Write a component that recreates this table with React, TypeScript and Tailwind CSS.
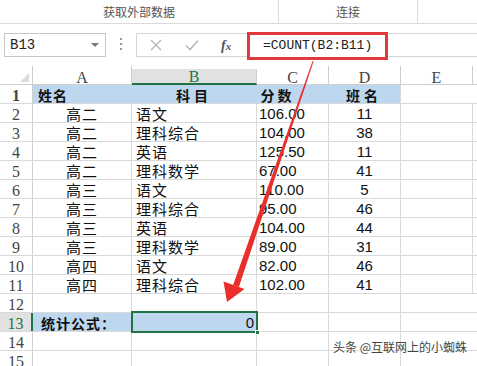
import React from "react";

// ---------------------------------------------------------------------------
// Data
// ---------------------------------------------------------------------------

const CJK = { fontFamily: '"Noto Sans CJK SC", "Noto Sans", sans-serif' };
const MONO = { fontFamily: '"Liberation Mono", "DejaVu Sans Mono", monospace' };
const SERIF = { fontFamily: '"Liberation Serif", "DejaVu Serif", serif' };
const NUM = { fontFamily: '"Liberation Sans", Arial, sans-serif' };

type Row = [string, string, string, string];

const ROWS: Row[] = [
  ["高二", "语文", "106.00", "11"],
  ["高二", "理科综合", "104.00", "38"],
  ["高二", "英语", "125.50", "11"],
  ["高二", "理科数学", "67.00", "41"],
  ["高三", "语文", "110.00", "5"],
  ["高三", "理科综合", "95.00", "46"],
  ["高三", "英语", "104.00", "44"],
  ["高三", "理科数学", "89.00", "31"],
  ["高四", "语文", "82.00", "46"],
  ["高四", "理科综合", "102.00", "41"],
];

const GRID = "border-r border-[#d9d9d9]";

// ---------------------------------------------------------------------------
// Pieces
// ---------------------------------------------------------------------------

function RowHead({ n, active }: { n: number; active?: boolean }) {
  return (
    <div
      style={SERIF}
      className={`flex w-[33px] shrink-0 items-center justify-center pt-[3px] text-[16px] leading-none ${
        active
          ? "border-r-2 border-[#217346] bg-[#e1e1e1] text-[#217346]"
          : "border-r border-[#cfcfcf] text-[#444]"
      }`}
    >
      {n}
    </div>
  );
}

function Rest() {
  return (
    <>
      <div className={`w-[72px] shrink-0 ${GRID}`} />
      <div className="flex-1" />
    </>
  );
}

function EmptyRow({ n }: { n: number }) {
  return (
    <div className="flex h-[19px] border-b border-[#d9d9d9]">
      <RowHead n={n} />
      <div className={`w-[99px] shrink-0 ${GRID}`} />
      <div className={`w-[125px] shrink-0 ${GRID}`} />
      <div className={`w-[72px] shrink-0 ${GRID}`} />
      <Rest />
    </div>
  );
}

export default function App() {
  return (
    <div className="relative h-[366px] w-[477px] overflow-hidden bg-white">
      {/* Ribbon group labels */}
      <div
        style={CJK}
        className="flex h-[24px] border-b border-[#dadada] text-[12px] text-[#555]"
      >
        <div className="flex w-[279px] items-center justify-center border-r border-[#dadada]">
          获取外部数据
        </div>
        <div className="flex w-[139px] items-center justify-center border-r border-[#dadada]">
          连接
        </div>
        <div className="flex-1" />
      </div>

      {/* Formula bar */}
      <div className="flex h-[42px] items-start pl-[4px] pt-[8px]">
        <div className="mt-[1px] flex h-[24px] w-[102px] items-center justify-between border border-[#c6c6c6] pl-[5px] pr-[6px]">
          <span style={MONO} className="text-[14px] text-[#222]">
            B13
          </span>
          <span className="h-0 w-0 border-x-[4px] border-t-[4px] border-x-transparent border-t-[#777]" />
        </div>
        <div className="flex w-[30px] flex-col items-center gap-[3px] pt-[6px]">
          <span className="h-[2px] w-[2px] bg-[#9a9a9a]" />
          <span className="h-[2px] w-[2px] bg-[#9a9a9a]" />
          <span className="h-[2px] w-[2px] bg-[#9a9a9a]" />
        </div>
        <div className="mt-[1px] flex h-[24px] w-[111px] items-center border border-r-0 border-[#d4d4d4]">
          <svg width="12" height="12" viewBox="0 0 12 12" className="ml-[13px]">
            <path d="M1 1L11 11M11 1L1 11" stroke="#b8b8b8" strokeWidth="1.4" />
          </svg>
          <svg width="14" height="12" viewBox="0 0 14 12" className="ml-[23px]">
            <path d="M1 6.5L5 10.5L13 1.5" stroke="#b8b8b8" strokeWidth="1.6" fill="none" />
          </svg>
          <span
            style={SERIF}
            className="ml-[22px] text-[14px] font-semibold italic text-[#555]"
          >
            f<span className="text-[11px]">x</span>
          </span>
        </div>
        <div className="flex h-[28px] w-[141px] items-center border-[3px] border-[#e13a3c] pl-[13px]">
          <span style={MONO} className="text-[13px] text-[#222]">
            =COUNT(B2:B11)
          </span>
        </div>
        <div className="mt-[1px] h-[24px] flex-1 border-y border-[#d4d4d4]" />
      </div>

      {/* Column headers */}
      <div
        style={SERIF}
        className="flex h-[19px] border-b border-[#cfcfcf] text-[16px] leading-none text-[#444]"
      >
        <div className="relative w-[33px] shrink-0 border-r border-[#cfcfcf]">
          <span className="absolute bottom-[2px] right-[3px] h-0 w-0 border-b-[9px] border-l-[9px] border-b-[#dcdcdc] border-l-transparent" />
        </div>
        <div className="flex w-[99px] shrink-0 items-center justify-center border-r border-[#cfcfcf] pt-[5px]">
          A
        </div>
        <div className="-mb-px mt-[3px] flex w-[125px] shrink-0 items-center justify-center border-b-2 border-r border-b-[#217346] border-r-[#cfcfcf] bg-[#e1e1e1] pt-[2px] text-[#217346]">
          B
        </div>
        <div className="flex w-[72px] shrink-0 items-center justify-center border-r border-[#cfcfcf] pt-[5px]">
          C
        </div>
        <div className="flex w-[72px] shrink-0 items-center justify-center border-r border-[#cfcfcf] pt-[5px]">
          D
        </div>
        <div className="flex w-[72px] shrink-0 items-center justify-center border-r border-[#cfcfcf] pt-[5px]">
          E
        </div>
        <div className="flex-1" />
      </div>

      {/* Row 1: header fields */}
      <div
        style={CJK}
        className="flex h-[19px] border-b border-[#d9d9d9] text-[14px] font-bold text-[#111]"
      >
        <RowHead n={1} />
        <div className="flex w-[368px] shrink-0 items-center border-r border-[#d9d9d9] bg-[#bdd7ee] pt-[2px]">
          <div className="w-[99px] pl-[5px] tracking-[1px]">姓名</div>
          <div className="w-[125px] text-center tracking-[4px]">科目</div>
          <div className="w-[72px] pl-[4px] tracking-[3px]">分数</div>
          <div className="w-[72px] text-center tracking-[4px]">班名</div>
        </div>
        <div className="flex-1" />
      </div>

      {ROWS.map((r, i) => (
        <div key={i} className="flex h-[19px] border-b border-[#d9d9d9] text-[#111]">
          <RowHead n={i + 2} />
          <div
            style={CJK}
            className={`flex w-[99px] shrink-0 items-center justify-center pt-[2px] text-[15px] tracking-[1px] ${GRID}`}
          >
            {r[0]}
          </div>
          <div
            style={CJK}
            className={`flex w-[125px] shrink-0 items-center pl-[4px] pt-[2px] text-[15px] tracking-[1px] ${GRID}`}
          >
            {r[1]}
          </div>
          <div
            style={NUM}
            className={`flex w-[72px] shrink-0 items-center pl-[2px] pt-[2px] text-[15px] ${GRID}`}
          >
            {r[2]}
          </div>
          <div
            style={NUM}
            className={`flex w-[72px] shrink-0 items-center justify-center pt-[2px] text-[15px] ${GRID}`}
          >
            {r[3]}
          </div>
          <Rest />
        </div>
      ))}

      <EmptyRow n={12} />

      {/* Row 13: summary formula */}
      <div className="flex h-[19px] border-b border-[#d9d9d9]">
        <RowHead n={13} active />
        <div
          style={CJK}
          className="flex w-[99px] shrink-0 items-center bg-[#bdd7ee] pl-[8px] pt-[2px] text-[14px] font-bold tracking-[1px] text-[#111]"
        >
          统计公式：
        </div>
        <div className="relative flex w-[125px] shrink-0 items-center justify-end bg-[#bdd7ee] pr-[3px] pt-[2px]">
          <span style={NUM} className="text-[15px] text-[#111]">
            0
          </span>
          <div className="absolute -inset-y-[2px] -left-px -right-px border-2 border-[#217346]" />
          <div className="absolute -bottom-[4px] -right-[3px] h-[5px] w-[5px] border border-white bg-[#217346]" />
        </div>
        <div className={`w-[72px] shrink-0 ${GRID}`} />
        <Rest />
      </div>

      <EmptyRow n={14} />
      <EmptyRow n={15} />

      {/* Annotation arrow */}
      <svg
        className="pointer-events-none absolute left-0 top-0"
        width="477"
        height="366"
        viewBox="0 0 477 366"
      >
        <polygon points="312.6,61 313.6,61.3 238.9,286.9 233.1,285" fill="#ea2e2c" />
        <polygon points="227,302 223.5,281.5 244.5,289" fill="#ea2e2c" />
      </svg>

      {/* Watermark */}
      <div
        style={{ ...CJK, textShadow: "0 0 2px #fff, 0 0 2px #fff" }}
        className="absolute bottom-[10px] right-[10px] text-[12px] text-[#444]"
      >
        头条 @互联网上的小蜘蛛
      </div>
    </div>
  );
}
